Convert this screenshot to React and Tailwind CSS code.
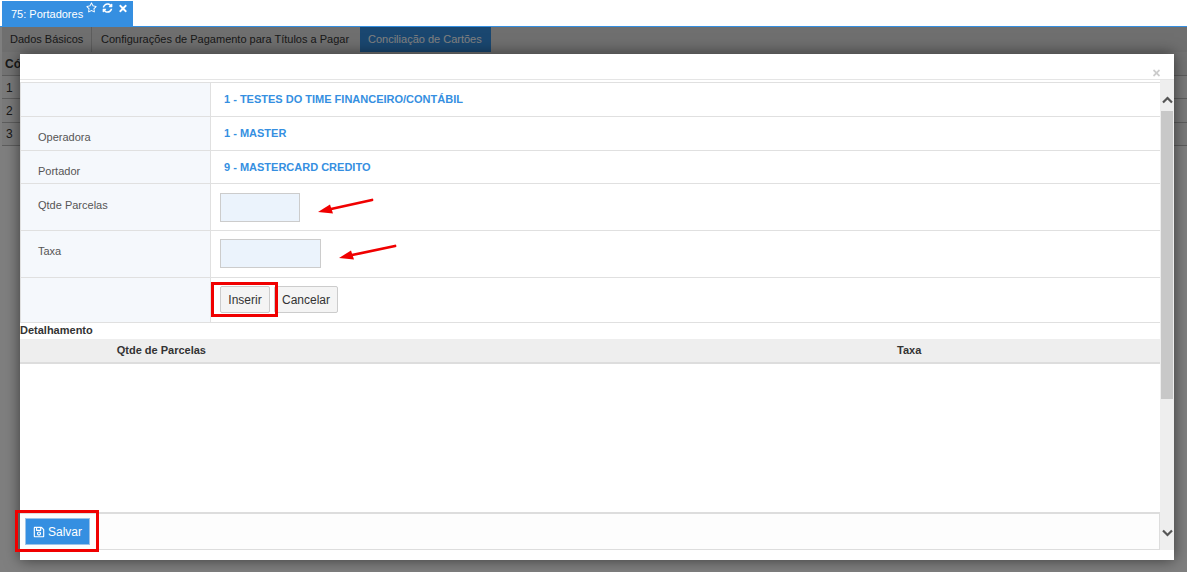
import React from "react";
import { FaRegStar, FaSyncAlt, FaTimes, FaRegSave } from "react-icons/fa";

const rows = [
  { label: "", value: "1 - TESTES DO TIME FINANCEIRO/CONTÁBIL", height: "h-[34px]", valueClass: "pb-[1px]" },
  { label: "Operadora", value: "1 - MASTER", height: "h-[34px]", valueClass: "pb-[1px]" },
  { label: "Portador", value: "9 - MASTERCARD CREDITO", height: "h-[33px]", valueClass: "" },
];

function Arrow({ className, tail }) {
  return (
    <svg className={`absolute ${className}`} width="60" height="20" viewBox="0 0 60 20">
      <line x1="14" y1="12" x2={tail} y2="3" stroke="#f00000" strokeWidth="2.8" strokeLinecap="round" />
      <path d="M1 15 L13 7.5 L16 16.5 Z" fill="#f00000" />
    </svg>
  );
}

export default function App() {
  return (
    <div className="relative h-[572px] w-[1187px] overflow-hidden bg-white font-['Liberation_Sans',Arial,sans-serif] text-xs text-[#333]">
      {/* Page behind the dialog */}
      <div className="flex h-[26px] pt-[1px] pl-[2px]">
        <div className="flex w-[131px] bg-[#358fe1] pl-[9px] whitespace-nowrap text-white">
          <span className="mt-[6px] text-[11px]">75: Portadores</span>
          <div className="mt-[1px] ml-[3px] flex gap-[5px]">
            <FaRegStar className="h-[11px] w-[11px]" />
            <FaSyncAlt className="mt-[1px] h-[10px] w-[11px]" />
            <FaTimes className="mt-[1px] h-[11px] w-[10px]" />
          </div>
        </div>
      </div>
      <div className="h-[1px] bg-[#358fe1]" />
      <div className="pl-[2px]">
        <div className="flex h-[25px] items-center bg-[#dedede] text-[11px] whitespace-nowrap">
          <div className="flex h-full w-[90px] items-center border-r border-[#bbb] pl-2">Dados Básicos</div>
          <div className="flex h-full w-[268px] items-center pl-[9px]">Configurações de Pagamento para Títulos a Pagar</div>
          <div className="flex h-full w-[131px] items-center bg-[#358fe1] pl-2 text-white">Conciliação de Cartões</div>
        </div>
        <div className="flex h-[24px] items-center border-b border-[#bbb] bg-[#e6e6e6] pl-[3px] font-bold">Cód</div>
        <div className="flex h-[23px] items-center border-b border-[#bbb] bg-[#f4f4f4] pt-[1px] pl-1">1</div>
        <div className="flex h-[24px] items-center border-b border-[#bbb] bg-[#f4f4f4] pl-1">2</div>
        <div className="flex h-[23px] items-center border-b border-[#bbb] bg-[#f4f4f4] pl-1">3</div>
      </div>

      {/* Overlay */}
      <div className="absolute inset-x-0 top-[27px] bottom-0 bg-black/50" />

      {/* Dialog */}
      <div className="absolute top-[54px] left-[20px] flex h-[506px] w-[1154px] flex-col bg-white shadow-[0_0_14px_rgba(0,0,0,0.55)]">
        <div className="relative h-[26px] shrink-0 border-b border-[#e5e5e5]">
          <FaTimes className="absolute top-[14px] right-[13px] h-[10px] w-[9px] text-[#ccc]" />
        </div>
        <div className="flex min-h-0 flex-1">
          <div className="flex w-[1140px] flex-col pt-[2px]">
            <div className="border-t border-[#e0e0e0]">
              {rows.map((row) => (
                <div key={row.value} className={`flex ${row.height} border-b border-[#e0e0e0]`}>
                  <div className="w-[191px] shrink-0 border-x border-[#e0e0e0] bg-[#f5f8fc] pt-[13px] pl-[17px] text-[11px] text-[#555]">
                    {row.label}
                  </div>
                  <div className={`flex items-center pl-[13px] text-[11px] font-bold text-[#358fe1] ${row.valueClass}`}>{row.value}</div>
                </div>
              ))}
              <div className="flex h-[47px] border-b border-[#e0e0e0]">
                <div className="w-[191px] shrink-0 border-x border-[#e0e0e0] bg-[#f5f8fc] pt-[14px] pl-[17px] text-[11px] text-[#555]">Qtde Parcelas</div>
                <div className="pt-[9px] pl-[9px]">
                  <input className="block h-[29px] w-[80px] border border-[#ccc] bg-[#ebf3fc]" />
                </div>
              </div>
              <div className="flex h-[47px] border-b border-[#e0e0e0]">
                <div className="w-[191px] shrink-0 border-x border-[#e0e0e0] bg-[#f5f8fc] pt-[13px] pl-[17px] text-[11px] text-[#555]">Taxa</div>
                <div className="pt-[8px] pl-[9px]">
                  <input className="block h-[29px] w-[101px] border border-[#ccc] bg-[#ebf3fc]" />
                </div>
              </div>
              <div className="flex h-[45px] border-b border-[#e0e0e0]">
                <div className="w-[191px] shrink-0 border-x border-[#e0e0e0] bg-[#f5f8fc]" />
                <div className="flex gap-[4px] pt-[8px] pl-[9px]">
                  <button className="h-[27px] w-[50px] rounded-[2px] border border-[#ccc] bg-[#f4f4f4] text-xs text-[#333]">Inserir</button>
                  <button className="h-[27px] w-[64px] rounded-[2px] border border-[#ccc] bg-[#f4f4f4] text-xs text-[#333]">Cancelar</button>
                </div>
              </div>
            </div>
            <div className="h-[16px] text-[11px] leading-[15px] font-bold">Detalhamento</div>
            <div className="flex h-[25px] border-b-2 border-[#ddd] bg-[#eee] text-[11px] leading-[23px] font-bold">
              <div className="w-[570px] pr-[384px] text-right">Qtde de Parcelas</div>
              <div className="w-[570px] pl-[307px]">Taxa</div>
            </div>
            <div className="flex-1" />
            <div className="mb-[10px] flex h-[38px] items-center border-t-2 border-r border-b border-[#ddd] bg-[#fdfdfd] pl-[5px]">
              <button className="flex h-[27px] w-[65px] items-center justify-center gap-[3px] border border-[#9dc3e8] bg-[#358fe1] text-xs text-white">
                <FaRegSave className="h-[12px] w-[12px]" />
                Salvar
              </button>
            </div>
          </div>
          <div className="mb-[10px] flex w-[14px] flex-col items-center bg-[#eee]">
            <div className="flex h-[31px] w-full items-center justify-center pt-2">
              <svg width="11" height="8" viewBox="0 0 11 8">
                <path d="M1 6.5 L5.5 2 L10 6.5" fill="none" stroke="#555" strokeWidth="2.2" />
              </svg>
            </div>
            <div className="h-[288px] w-[12px] bg-[#c8c8c8]" />
            <div className="flex flex-1 items-end justify-center pb-[13px]">
              <svg width="11" height="8" viewBox="0 0 11 8">
                <path d="M1 1.5 L5.5 6 L10 1.5" fill="none" stroke="#555" strokeWidth="2.2" />
              </svg>
            </div>
          </div>
        </div>
      </div>

      {/* Annotations */}
      <Arrow className="top-[197px] left-[317px]" tail={55} />
      <Arrow className="top-[243px] left-[338px]" tail={57} />
      <div className="absolute top-[282px] left-[211px] h-[35px] w-[67px] border-[3px] border-[#f00000]" />
      <div className="absolute top-[510px] left-[15px] h-[42px] w-[84px] border-[3px] border-[#f00000]" />
    </div>
  );
}
